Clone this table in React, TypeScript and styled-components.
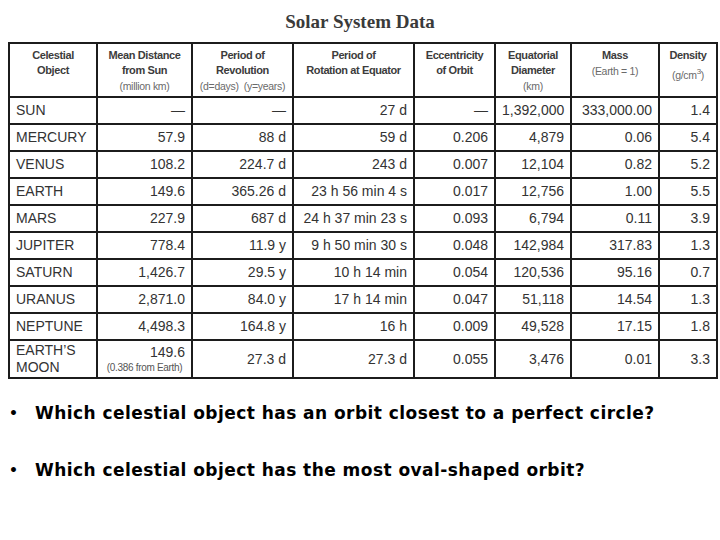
import React from 'react';
import styled, { createGlobalStyle } from 'styled-components';

const GlobalStyle = createGlobalStyle`
  html, body {
    margin: 0;
    padding: 0;
    background: #ffffff;
  }
  body {
    width: 720px;
    height: 540px;
    overflow: hidden;
  }
`;

const Page = styled.div`
  width: 720px;
  height: 540px;
  display: flex;
  flex-direction: column;
  background: #fff;
`;

const Title = styled.h1`
  margin: 0;
  height: 42px;
  display: flex;
  align-items: center;
  justify-content: center;
  padding-top: 2px;
  box-sizing: border-box;
  font-family: 'Liberation Serif', 'Times New Roman', serif;
  font-weight: bold;
  font-size: 19px;
  color: #3a3a3a;
`;

const Table = styled.table`
  margin-left: 8px;
  width: 708px;
  border-collapse: collapse;
  table-layout: fixed;
  font-family: 'Liberation Sans', Arial, sans-serif;
  color: #333;
`;

const HeadCell = styled.th`
  border: 2px solid #1c1c1c;
  height: 48px;
  padding: 4px 0 0;
  vertical-align: top;
  text-align: center;
  font-family: 'Liberation Sans', Arial, sans-serif;
  font-weight: bold;
  font-size: 11px;
  letter-spacing: -0.4px;
  line-height: 15px;
  white-space: nowrap;
  color: #3c3c3c;
`;

const Sub = styled.span`
  display: block;
  margin-top: 1px;
  font-weight: normal;
  font-size: 10.5px;
  letter-spacing: -0.3px;
  color: #6a6a6a;
`;

const Row = styled.tr<{ $tall?: boolean }>`
  height: ${(p) => (p.$tall ? '38px' : '27px')};
`;

const Cell = styled.td<{ $left?: boolean }>`
  border: 2px solid #1c1c1c;
  padding: 0 6px;
  text-align: ${(p) => (p.$left ? 'left' : 'right')};
  font-size: 14px;
  line-height: 17px;
  white-space: nowrap;
  vertical-align: middle;
`;

const Note = styled.span`
  display: block;
  font-size: 10px;
  letter-spacing: -0.3px;
  line-height: 13px;
  color: #555;
  text-align: center;
`;

const Questions = styled.ul`
  list-style: none;
  margin: 0;
  padding: 23px 0 0 0;
  display: flex;
  flex-direction: column;
  gap: 35px;
`;

const Question = styled.li`
  display: flex;
  align-items: center;
  height: 22px;
  font-family: 'DejaVu Sans', 'Comic Sans MS', sans-serif;
  font-weight: bold;
  font-size: 17px;
  letter-spacing: 0.45px;
  color: #000;
`;

const Bullet = styled.span`
  width: 35px;
  padding-left: 9px;
  box-sizing: border-box;
  font-size: 14px;
`;

const widths = [88, 95, 101, 121, 81, 76, 88, 58];

type Planet = {
  name: React.ReactNode;
  dist: React.ReactNode;
  rev: string;
  rot: string;
  ecc: string;
  dia: string;
  mass: string;
  dens: string;
  tall?: boolean;
};

const rows: Planet[] = [
  { name: 'SUN', dist: '—', rev: '—', rot: '27 d', ecc: '—', dia: '1,392,000', mass: '333,000.00', dens: '1.4' },
  { name: 'MERCURY', dist: '57.9', rev: '88 d', rot: '59 d', ecc: '0.206', dia: '4,879', mass: '0.06', dens: '5.4' },
  { name: 'VENUS', dist: '108.2', rev: '224.7 d', rot: '243 d', ecc: '0.007', dia: '12,104', mass: '0.82', dens: '5.2' },
  { name: 'EARTH', dist: '149.6', rev: '365.26 d', rot: '23 h 56 min 4 s', ecc: '0.017', dia: '12,756', mass: '1.00', dens: '5.5' },
  { name: 'MARS', dist: '227.9', rev: '687 d', rot: '24 h 37 min 23 s', ecc: '0.093', dia: '6,794', mass: '0.11', dens: '3.9' },
  { name: 'JUPITER', dist: '778.4', rev: '11.9 y', rot: '9 h 50 min 30 s', ecc: '0.048', dia: '142,984', mass: '317.83', dens: '1.3' },
  { name: 'SATURN', dist: '1,426.7', rev: '29.5 y', rot: '10 h 14 min', ecc: '0.054', dia: '120,536', mass: '95.16', dens: '0.7' },
  { name: 'URANUS', dist: '2,871.0', rev: '84.0 y', rot: '17 h 14 min', ecc: '0.047', dia: '51,118', mass: '14.54', dens: '1.3' },
  { name: 'NEPTUNE', dist: '4,498.3', rev: '164.8 y', rot: '16 h', ecc: '0.009', dia: '49,528', mass: '17.15', dens: '1.8' },
  {
    name: (
      <>
        EARTH’S
        <br />
        MOON
      </>
    ),
    dist: (
      <>
        149.6
        <Note>(0.386 from Earth)</Note>
      </>
    ),
    rev: '27.3 d',
    rot: '27.3 d',
    ecc: '0.055',
    dia: '3,476',
    mass: '0.01',
    dens: '3.3',
    tall: true,
  },
];

export default function App() {
  return (
    <Page>
      <GlobalStyle />
      <Title>Solar System Data</Title>
      <Table>
        <colgroup>
          {widths.map((w, i) => (
            <col key={i} style={{ width: w }} />
          ))}
        </colgroup>
        <thead>
          <tr>
            <HeadCell>
              Celestial
              <br />
              Object
            </HeadCell>
            <HeadCell>
              Mean Distance
              <br />
              from Sun
              <Sub>(million km)</Sub>
            </HeadCell>
            <HeadCell>
              Period of
              <br />
              Revolution
              <Sub>(d=days) &nbsp;(y=years)</Sub>
            </HeadCell>
            <HeadCell>
              Period of
              <br />
              Rotation at Equator
            </HeadCell>
            <HeadCell>
              Eccentricity
              <br />
              of Orbit
            </HeadCell>
            <HeadCell>
              Equatorial
              <br />
              Diameter
              <Sub>(km)</Sub>
            </HeadCell>
            <HeadCell>
              Mass
              <Sub>(Earth = 1)</Sub>
            </HeadCell>
            <HeadCell>
              Density
              <Sub>
                (g/cm<sup style={{ fontSize: 8 }}>3</sup>)
              </Sub>
            </HeadCell>
          </tr>
        </thead>
        <tbody>
          {rows.map((r, i) => (
            <Row key={i} $tall={r.tall}>
              <Cell $left>{r.name}</Cell>
              <Cell>{r.dist}</Cell>
              <Cell>{r.rev}</Cell>
              <Cell>{r.rot}</Cell>
              <Cell>{r.ecc}</Cell>
              <Cell>{r.dia}</Cell>
              <Cell>{r.mass}</Cell>
              <Cell>{r.dens}</Cell>
            </Row>
          ))}
        </tbody>
      </Table>
      <Questions>
        <Question>
          <Bullet>•</Bullet>
          Which celestial object has an orbit closest to a perfect circle?
        </Question>
        <Question>
          <Bullet>•</Bullet>
          Which celestial object has the most oval-shaped orbit?
        </Question>
      </Questions>
    </Page>
  );
}
